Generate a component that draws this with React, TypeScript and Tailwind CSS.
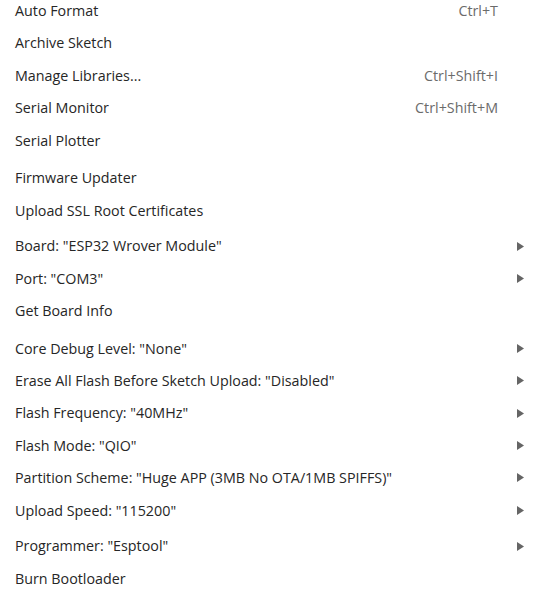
import React from 'react';

type Item = { label: string; shortcut?: string; sub?: boolean };

const groups: Item[][] = [
  [
    { label: 'Auto Format', shortcut: 'Ctrl+T' },
    { label: 'Archive Sketch' },
    { label: 'Manage Libraries...', shortcut: 'Ctrl+Shift+I' },
    { label: 'Serial Monitor', shortcut: 'Ctrl+Shift+M' },
    { label: 'Serial Plotter' },
  ],
  [
    { label: 'Firmware Updater' },
    { label: 'Upload SSL Root Certificates' },
  ],
  [
    { label: 'Board: "ESP32 Wrover Module"', sub: true },
    { label: 'Port: "COM3"', sub: true },
    { label: 'Get Board Info' },
  ],
  [
    { label: 'Core Debug Level: "None"', sub: true },
    { label: 'Erase All Flash Before Sketch Upload: "Disabled"', sub: true },
    { label: 'Flash Frequency: "40MHz"', sub: true },
    { label: 'Flash Mode: "QIO"', sub: true },
    { label: 'Partition Scheme: "Huge APP (3MB No OTA/1MB SPIFFS)"', sub: true },
    { label: 'Upload Speed: "115200"', sub: true },
  ],
  [
    { label: 'Programmer: "Esptool"', sub: true },
    { label: 'Burn Bootloader' },
  ],
];

const gaps = ['h-[5.3px]', 'h-[3.3px]', 'h-[5.2px]', 'h-[3.3px]'];

function MenuRow({ item }: { item: Item }) {
  return (
    <div className="flex items-center h-[32.4px] pl-[15px] pr-[11px]">
      <span className="flex-1 whitespace-nowrap">{item.label}</span>
      {item.shortcut && <span className="text-[#6b6b6b] mr-[26px]">{item.shortcut}</span>}
      {item.sub && (
        <svg width="7" height="9" viewBox="0 0 7 9">
          <path d="M0 0 L7 4.5 L0 9 Z" fill="#656565" />
        </svg>
      )}
    </div>
  );
}

export default function App() {
  return (
    <div className="w-[535px] h-[589px] overflow-hidden bg-white">
      <div className="mt-[-5.5px] text-[14.3px] text-[#262626]" style={{ fontFamily: '"Open Sans", "Noto Sans", sans-serif' }}>
        {groups.map((g, i) => (
          <div key={i}>
            {g.map(item => <MenuRow key={item.label} item={item} />)}
            {i < gaps.length && <div className={gaps[i]} />}
          </div>
        ))}
      </div>
    </div>
  );
}
